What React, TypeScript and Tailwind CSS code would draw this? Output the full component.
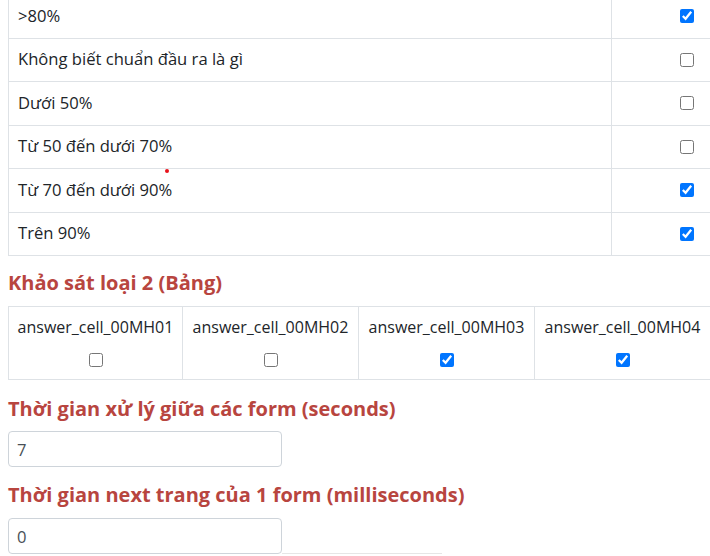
import React from 'react';

const options: { label: string; checked: boolean }[] = [
  { label: '>80%', checked: true },
  { label: 'Không biết chuẩn đầu ra là gì', checked: false },
  { label: 'Dưới 50%', checked: false },
  { label: 'Từ 50 đến dưới 70%', checked: false },
  { label: 'Từ 70 đến dưới 90%', checked: true },
  { label: 'Trên 90%', checked: true },
];

const cells: { code: string; checked: boolean }[] = [
  { code: 'answer_cell_00MH01', checked: false },
  { code: 'answer_cell_00MH02', checked: false },
  { code: 'answer_cell_00MH03', checked: true },
  { code: 'answer_cell_00MH04', checked: true },
];

function Heading({ children, className = '' }: { children: React.ReactNode; className?: string }) {
  return (
    <h3 className={`ml-2 text-[20px] leading-7 font-bold text-[#b8453f] ${className}`}>{children}</h3>
  );
}

export default function App() {
  return (
    <div
      className="w-[710px] h-[556px] overflow-hidden bg-white text-[#212529]"
      style={{ fontFamily: '"Open Sans", "Noto Sans", sans-serif' }}
    >
      <div className="w-[1000px]">
        {/* Khảo sát loại 1 */}
        <div className="ml-2 -mt-[6px] w-[754px] border-l border-t border-r border-[#dee2e6]">
          {options.map((o, i) => (
            <div key={o.label} className="relative flex h-[43.5px] border-b border-[#dee2e6]">
              <div className="flex w-[603px] items-center border-r border-[#dee2e6] pl-[9px] text-[16.6px]">
                {o.label}
              </div>
              <div className="flex flex-1 items-center justify-center">
                <input type="checkbox" defaultChecked={o.checked} className="h-[14px] w-[14px]" />
              </div>
              {i === 4 && (
                <span className="absolute left-[156px] top-0 h-1 w-1 rounded-full bg-[#e8121b]" />
              )}
            </div>
          ))}
        </div>

        <Heading className="mt-[13px]">Khảo sát loại 2 (Bảng)</Heading>

        <div className="ml-2 mt-[9px] grid w-[703px] grid-cols-[174px_176px_176px_176px] border-l border-t border-b border-[#dee2e6]">
          {cells.map((c) => (
            <div
              key={c.code}
              className="flex h-[72px] flex-col items-center border-r border-[#dee2e6] pt-[8px] text-[16px]"
            >
              <span className="leading-6">{c.code}</span>
              <input type="checkbox" defaultChecked={c.checked} className="mt-[14px] h-[14px] w-[14px]" />
            </div>
          ))}
        </div>

        <Heading className="mt-[15px]">Thời gian xử lý giữa các form (seconds)</Heading>
        <input
          type="text"
          defaultValue="7"
          className="ml-2 mt-2 block h-9 w-[274px] rounded border border-[#ced4da] px-2 text-[16.6px] text-[#495057] outline-none"
        />

        <Heading className="mt-[14px]">Thời gian next trang của 1 form (milliseconds)</Heading>
        <div className="mt-[9px] flex items-end">
          <input
            type="text"
            defaultValue="0"
            className="ml-2 block h-9 w-[274px] rounded border border-[#ced4da] px-2 text-[16.6px] text-[#495057] outline-none"
          />
          <div className="h-px w-[160px] bg-[#e6e6e6]" />
        </div>
      </div>
    </div>
  );
}
